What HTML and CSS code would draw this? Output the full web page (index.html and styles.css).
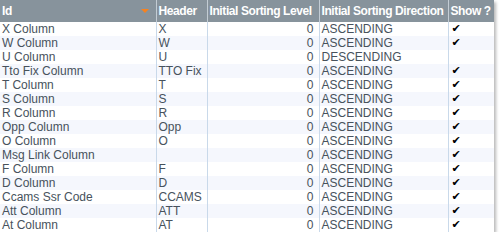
FILE: index.html
```html
<!DOCTYPE html>
<html>
<head>
<meta charset="utf-8">
<link rel="stylesheet" href="styles.css">
</head>
<body>
<div class="grid">
<table>
<colgroup>
<col class="c-id"><col class="c-hdr"><col class="c-lvl"><col class="c-dir"><col class="c-show">
</colgroup>
<thead>
<tr>
<th class="sorted">Id<span class="arrow"></span></th>
<th>Header</th>
<th>Initial Sorting Level</th>
<th>Initial Sorting Direction</th>
<th>Show ?</th>
</tr>
</thead>
<tbody>
<tr><td>X Column</td><td>X</td><td class="num">0</td><td>ASCENDING</td><td class="chk">✔</td></tr>
<tr><td>W Column</td><td>W</td><td class="num">0</td><td>ASCENDING</td><td class="chk">✔</td></tr>
<tr><td>U Column</td><td>U</td><td class="num">0</td><td>DESCENDING</td><td class="chk"></td></tr>
<tr><td>Tto Fix Column</td><td>TTO Fix</td><td class="num">0</td><td>ASCENDING</td><td class="chk">✔</td></tr>
<tr><td>T Column</td><td>T</td><td class="num">0</td><td>ASCENDING</td><td class="chk">✔</td></tr>
<tr><td>S Column</td><td>S</td><td class="num">0</td><td>ASCENDING</td><td class="chk">✔</td></tr>
<tr><td>R Column</td><td>R</td><td class="num">0</td><td>ASCENDING</td><td class="chk">✔</td></tr>
<tr><td>Opp Column</td><td>Opp</td><td class="num">0</td><td>ASCENDING</td><td class="chk">✔</td></tr>
<tr><td>O Column</td><td>O</td><td class="num">0</td><td>ASCENDING</td><td class="chk">✔</td></tr>
<tr><td>Msg Link Column</td><td></td><td class="num">0</td><td>ASCENDING</td><td class="chk">✔</td></tr>
<tr><td>F Column</td><td>F</td><td class="num">0</td><td>ASCENDING</td><td class="chk">✔</td></tr>
<tr><td>D Column</td><td>D</td><td class="num">0</td><td>ASCENDING</td><td class="chk">✔</td></tr>
<tr><td>Ccams Ssr Code</td><td>CCAMS</td><td class="num">0</td><td>ASCENDING</td><td class="chk">✔</td></tr>
<tr><td>Att Column</td><td>ATT</td><td class="num">0</td><td>ASCENDING</td><td class="chk">✔</td></tr>
<tr><td>At Column</td><td>AT</td><td class="num">0</td><td>ASCENDING</td><td class="chk">✔</td></tr>
</tbody>
</table>
</div>
</body>
</html>
```
FILE: styles.css
```css
html, body {
  margin: 0;
  padding: 0;
  background: #ffffff;
}
.grid {
  width: 494px;
  box-shadow: 2px 2px 3px rgba(0, 0, 0, 0.28);
  background: #ffffff;
}
table {
  width: 494px;
  border-collapse: collapse;
  table-layout: fixed;
  font-family: "Liberation Sans", Arial, sans-serif;
}
col.c-id { width: 156px; }
col.c-hdr { width: 51px; }
col.c-lvl { width: 112px; }
col.c-dir { width: 129px; }
col.c-show { width: 46px; }
th {
  background: #87939c;
  color: #ffffff;
  font-weight: bold;
  font-size: 12px;
  letter-spacing: -0.4px;
  text-align: left;
  height: 22px;
  padding: 0 0 0 2px;
  border-left: 1px solid #c3ccd4;
  white-space: nowrap;
  overflow: hidden;
  position: relative;
}
th:first-child { border-left: none; }
.arrow {
  position: absolute;
  right: 7px;
  top: 9px;
  width: 0;
  height: 0;
  border-left: 4px solid transparent;
  border-right: 4px solid transparent;
  border-top: 4px solid #f58220;
}
td {
  font-size: 12px;
  color: #47525c;
  height: 14px;
  line-height: 14px;
  padding: 0 0 0 2px;
  border-left: 1px solid #c9d9ea;
  white-space: nowrap;
  overflow: hidden;
}
td:first-child { border-left: none; }
tbody tr:nth-child(even) td { background: #f5f7fd; }
td.num {
  text-align: right;
  padding: 0 5px 0 0;
}
td.chk {
  color: #000000;
  font-family: "DejaVu Sans", sans-serif;
  font-size: 11px;
  padding-left: 3px;
}
```
